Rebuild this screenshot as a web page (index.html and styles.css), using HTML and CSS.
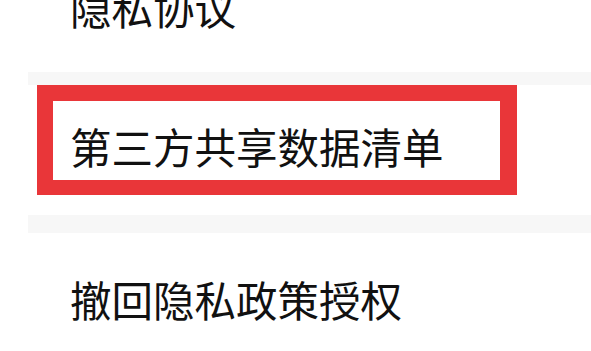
FILE: index.html
```html
<!DOCTYPE html>
<html lang="zh-CN">
<head>
  <meta charset="UTF-8">
  <title>隐私设置</title>
  <meta name="viewport" content="width=device-width, initial-scale=1.0">
  <link rel="stylesheet" href="styles.css">
</head>
<body>
  <div class="list">
    <div class="row row-first">隐私协议</div>
    <div class="gap"></div>

    <!-- 红框标注 -->
    <div class="row row-marked">
      第三方共享数据清单
      <div class="mark"></div>
    </div>
    <div class="gap gap-wide"></div>

    <div class="row row-last">撤回隐私政策授权</div>
  </div>
</body>
</html>
```

FILE: styles.css
```css
* {
  box-sizing: border-box;
}

body {
  margin: 0;
  padding: 0;
  background-color: #fff;
  font-family: "Noto Sans CJK SC", "Noto Sans", sans-serif;
  color: #111;
  overflow: hidden;
}

.list {
  display: flex;
  flex-direction: column;
  margin-top: -57px;
}

.row {
  display: flex;
  align-items: center;
  padding-left: 70px;
  font-size: 41.5px;
  line-height: 1;
  background-color: #fff;
}

.row-first {
  height: 129px;
}

.row-marked {
  position: relative;
  height: 130px;
  padding-bottom: 6px;
}

.row-last {
  height: 134px;
}

.gap {
  height: 13px;
  margin-left: 28px;
  background-color: #f7f7f7;
}

.gap-wide {
  height: 18px;
}

.mark {
  position: absolute;
  top: 0;
  left: 37px;
  width: 480px;
  height: 110px;
  border: 16px solid #e93639;
  border-right-width: 17px;
  border-bottom-width: 15px;
}
```
